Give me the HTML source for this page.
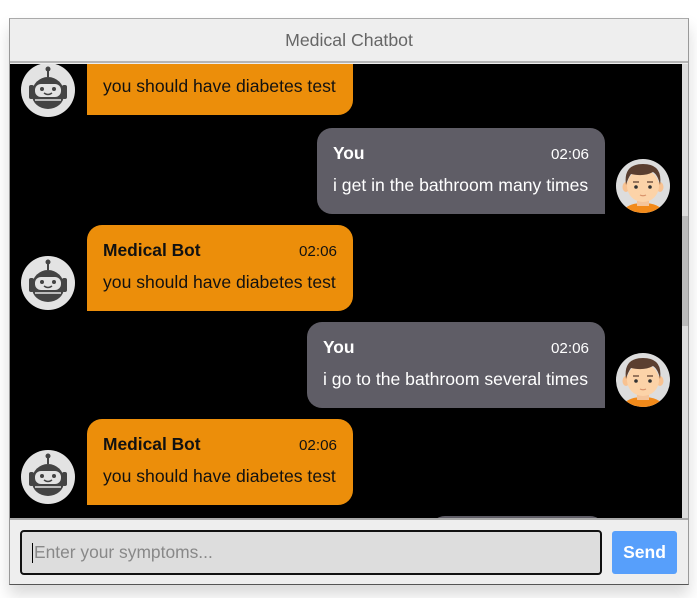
<!DOCTYPE html>
<html><head><meta charset="utf-8"><style>
*{box-sizing:border-box;margin:0;padding:0}
body{width:697px;height:598px;background:#fff;font-family:"Liberation Sans",Arial,sans-serif;position:relative;overflow:hidden}
.box{position:absolute;left:9px;top:18px;width:680px;height:567px;border-color:#aaa #999 #555 #999;border-style:solid;border-width:1px;box-shadow:0 10px 15px rgba(0,0,0,.15);background:#eee}
.hdr{position:absolute;left:0;top:0;width:678px;height:44px;border-bottom:2px solid #b5b5b5;text-align:center;line-height:43px;color:#666;font-size:17.7px}
.chat{position:absolute;left:0;top:45px;width:678px;height:454px;background:#000;overflow:hidden}
.sb{position:absolute;right:0;top:0;width:6px;height:454px;background:#ddd}
.th{position:absolute;right:0;top:152px;width:6px;height:110px;background:#bbb}
.b{position:absolute;height:86px;padding:0 16px;font-size:17.6px;border-radius:15px}
.bot{background:#ec8e0a;color:#111;border-bottom-left-radius:0}
.usr{background:#5f5d66;color:#fff;border-bottom-right-radius:0}
.n{position:absolute;top:15px;left:16px;font-weight:bold;font-size:17.4px}
.t{position:absolute;top:18px;right:16px;font-size:15.2px}
.m{position:absolute;top:47px;left:16px;white-space:nowrap}
.av{position:absolute;width:54px;height:54px}
.foot{position:absolute;left:0;top:499px;width:678px;height:66px;border-top:2px solid #aaa}
.in{position:absolute;left:10px;top:10px;width:582px;height:45px;border:2px solid #111;border-radius:4px;background:#ddd;color:#888;font-size:17.4px;line-height:41px;padding-left:12px}
.in:before{content:"";position:absolute;left:10px;top:11px;width:1px;height:20px;background:#000}
.send{position:absolute;left:602px;top:11px;width:65px;height:43px;background:#579ffb;border-radius:3px;color:#fff;font-weight:bold;font-size:17.5px;text-align:center;line-height:43px}
</style></head><body>
<svg width="0" height="0" style="position:absolute"><defs>
<g id="bot"><circle cx="27" cy="27" r="27" fill="#e3e3e3"/><rect x="26" y="6" width="2" height="8" fill="#444"/><circle cx="27" cy="6" r="2.5" fill="#444"/><rect x="8" y="22" width="5" height="14" rx="2" fill="#444"/><rect x="41" y="22" width="5" height="14" rx="2" fill="#444"/><path d="M11 30a16 16 0 0 1 32 0v2a16 14 0 0 1-32 0z" fill="#444"/><rect x="14" y="21" width="26" height="13" rx="6" fill="#e3e3e3"/><circle cx="21" cy="26" r="2" fill="#444"/><circle cx="33" cy="26" r="2" fill="#444"/><path d="M23 30q4 3 8 0" stroke="#444" stroke-width="1.5" fill="none"/><path d="M14 37h26" stroke="#e3e3e3" stroke-width="1.5"/></g>
<g id="usr"><clipPath id="c"><circle cx="27" cy="27" r="27"/></clipPath><circle cx="27" cy="27" r="27" fill="#ddd"/><g clip-path="url(#c)"><path d="M4 60q2-16 23-16t23 16z" fill="#f28a1a"/><rect x="21" y="37" width="12" height="10" fill="#f5c49a"/><ellipse cx="10" cy="28" rx="3.5" ry="5" fill="#f8c291"/><ellipse cx="44" cy="28" rx="3.5" ry="5" fill="#f8c291"/><ellipse cx="27" cy="27" rx="16" ry="16" fill="#fcd3a8"/><path d="M10 26q-3-21 17-21q20 0 17 21q-2-10-7-13q-9 5-22 2q-3 4-5 11z" fill="#5b3f30"/><circle cx="20" cy="28" r="1.8" fill="#333"/><circle cx="34" cy="28" r="1.8" fill="#333"/><path d="M17 23h6M31 23h6" stroke="#5b3f30" stroke-width="1.2"/><path d="M24 36q3 1.5 6 0" stroke="#d9936b" stroke-width="1.2" fill="none"/></g></g>
</defs></svg>
<div class="box">
<div class="hdr">Medical Chatbot</div>
<div class="chat">
 <svg class="av" style="left:11px;top:-1px" viewBox="0 0 54 54"><use href="#bot"/></svg>
 <div class="b bot" style="left:77px;top:-35px;width:266px"><span class="n">Medical Bot</span><span class="t">02:06</span><span class="m">you should have diabetes test</span></div>

 <div class="b usr" style="left:307px;top:64px;width:288px"><span class="n">You</span><span class="t">02:06</span><span class="m">i get in the bathroom many times</span></div>
 <svg class="av" style="left:606px;top:95px" viewBox="0 0 54 54"><use href="#usr"/></svg>

 <svg class="av" style="left:11px;top:192px" viewBox="0 0 54 54"><use href="#bot"/></svg>
 <div class="b bot" style="left:77px;top:161px;width:266px"><span class="n">Medical Bot</span><span class="t">02:06</span><span class="m">you should have diabetes test</span></div>

 <div class="b usr" style="left:297px;top:258px;width:298px"><span class="n">You</span><span class="t">02:06</span><span class="m">i go to the bathroom several times</span></div>
 <svg class="av" style="left:606px;top:289px" viewBox="0 0 54 54"><use href="#usr"/></svg>

 <svg class="av" style="left:11px;top:386px" viewBox="0 0 54 54"><use href="#bot"/></svg>
 <div class="b bot" style="left:77px;top:355px;width:266px"><span class="n">Medical Bot</span><span class="t">02:06</span><span class="m">you should have diabetes test</span></div>

 <div class="b usr" style="left:420px;top:452px;width:175px"></div>
 <div class="sb"><div class="th"></div></div>
</div>
<div class="foot"><div class="in">Enter your symptoms...</div><div class="send">Send</div></div>
</div>
</body></html>
